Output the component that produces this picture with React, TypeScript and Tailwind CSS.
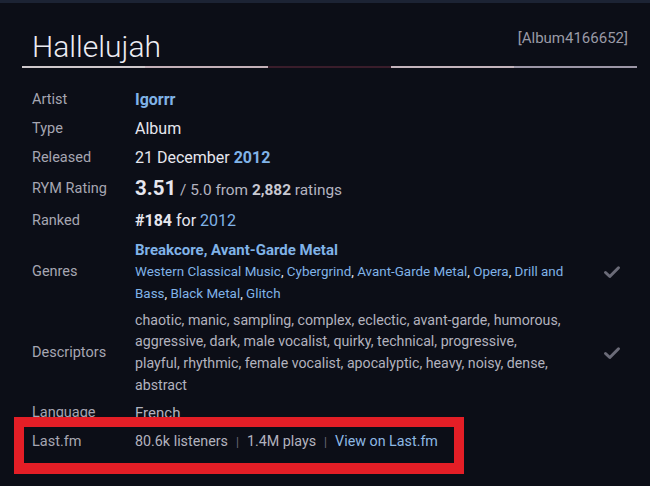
import React from "react";

const Check = () => (
  <svg width="18" height="14" viewBox="0 0 18 14" fill="none">
    <path d="M2.5 7.5 L6.8 11.5 L15.5 2.8" stroke="#6b6b78" strokeWidth="3" strokeLinecap="round" strokeLinejoin="round" />
  </svg>
);

const Row = ({ label, children, cls = "h-[29px]", check = false }: { label: string; children: React.ReactNode; cls?: string; check?: boolean }) => (
  <div className={`flex items-center ${cls}`}>
    <div className="w-[113px] shrink-0 pl-[10px] text-[14.5px] leading-[22px] text-[#a6a6b2]">{label}</div>
    <div className="w-[448px] shrink-0 leading-[22px]">{children}</div>
    <div className="flex flex-1 justify-center pl-[4px]">{check ? <Check /> : null}</div>
  </div>
);

const C = () => <span className="text-[#e6e6ee]">, </span>;

export default function App() {
  return (
    <div
      className="relative h-[486px] w-[650px] overflow-hidden border-t-[3px] border-[#1c2334] bg-[#0c0e17] text-[#e6e6ee]"
      style={{ fontFamily: "Roboto, 'Noto Sans', sans-serif" }}
    >
      <div className="pl-[22px] pr-[13px] pt-[26px]">
        <div className="flex items-start justify-between pl-[10px] pr-[9px]">
          <div className="text-[30px] font-light leading-[36px] text-[#ececf2]">Hallelujah</div>
          <div className="-mt-[2px] text-[15px] text-[#9a9aa6]">[Album4166652]</div>
        </div>
        <div className="mt-[1px] flex h-[2px] w-[615px]">
          <div className="flex-1 bg-[#cfc8cc]" />
          <div className="flex-1 bg-[#c4b0b8]" />
          <div className="flex-1 bg-[#3a1d2b]" />
          <div className="flex-1 bg-[#c4b4bc]" />
          <div className="flex-1 bg-[#9c96a6]" />
        </div>
        <div className="pt-[17px]">
          <Row label="Artist">
            <span className="text-[16px] font-bold text-[#80b3e8]">Igorrr</span>
          </Row>
          <Row label="Type">
            <span className="text-[16px]">Album</span>
          </Row>
          <Row label="Released">
            <span className="text-[16px]">21 December </span>
            <span className="text-[16px] font-bold text-[#80b3e8]">2012</span>
          </Row>
          <Row label="RYM Rating" cls="h-[33px]">
            <span className="text-[20.5px] font-bold">3.51</span>
            <span className="text-[15.4px] text-[#b4b4c0]"> / 5.0 from </span>
            <span className="text-[15.4px] font-bold text-[#c8c8d2]">2,882</span>
            <span className="text-[15.4px] text-[#b4b4c0]"> ratings</span>
          </Row>
          <Row label="Ranked" cls="h-[31px]">
            <span className="text-[16px] font-bold">#184</span>
            <span className="text-[16px]"> for </span>
            <span className="text-[16px] text-[#80b3e8]">2012</span>
          </Row>
          <Row label="Genres" cls="py-[2.5px]" check>
            <div className="text-[15px] font-bold text-[#80b3e8]">Breakcore, Avant-Garde Metal</div>
            <div className="whitespace-nowrap text-[13.4px] text-[#80b3e8]">
              Western Classical Music<C />Cybergrind<C />Avant-Garde Metal<C />Opera<C />Drill and
              <br />
              Bass<C />Black Metal<C />Glitch
            </div>
          </Row>
          <Row label="Descriptors" cls="pt-[2.7px] pb-[1.7px]" check>
            <div className="whitespace-nowrap text-[14.2px] leading-[21.67px] text-[#b2b2be]">
              chaotic, manic, sampling, complex, eclectic, avant-garde, humorous,
              <br />
              aggressive, dark, male vocalist, quirky, technical, progressive,
              <br />
              playful, rhythmic, female vocalist, apocalyptic, heavy, noisy, dense,
              <br />
              abstract
            </div>
          </Row>
          <Row label="Language">
            <span className="text-[15px] text-[#b2b2be]">French</span>
          </Row>
          <Row label="Last.fm">
            <span className="text-[14.3px] text-[#b2b2be]">80.6k listeners</span>
            <span className="mx-[8px] text-[12px] text-[#6a6a78]">|</span>
            <span className="text-[14.3px] text-[#b2b2be]">1.4M plays</span>
            <span className="mx-[8px] text-[12px] text-[#6a6a78]">|</span>
            <span className="text-[14.3px] text-[#8db8e4]">View on Last.fm</span>
          </Row>
        </div>
      </div>
      <div className="absolute left-[14px] top-[414px] h-[57px] w-[450px] border-[10px] border-b-[11px] border-[#e41e26]" />
    </div>
  );
}
